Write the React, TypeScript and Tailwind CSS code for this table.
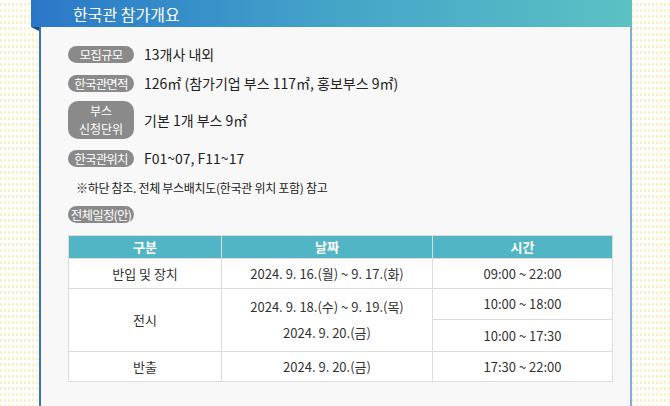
import React from "react";

const font = { fontFamily: '"Noto Sans CJK KR", "Noto Sans", sans-serif' };

const Badge: React.FC<{ children: React.ReactNode; tall?: boolean }> = ({ children, tall }) => (
    <div
        className={
            tall
                ? "w-[66px] h-[38px] rounded-[10px] bg-[#8a8a8a] text-white text-[12px] leading-[18px] flex flex-col items-center justify-center whitespace-nowrap"
                : "w-[66px] h-[17px] rounded-full bg-[#8a8a8a] text-white text-[12.5px] leading-[17px] flex items-center justify-center tracking-[-0.8px] whitespace-nowrap"
        }
    >
        {children}
    </div>
);

const InfoRow: React.FC<{ label: React.ReactNode; text: string; tall?: boolean; mt: string }> = ({
    label,
    text,
    tall,
    mt,
}) => (
    <div className={`flex items-center gap-[10px] ${mt}`}>
        <Badge tall={tall}>{label}</Badge>
        <span className="text-[14px] text-[#222] leading-[17px]">{text}</span>
    </div>
);

export default function App() {
    return (
        <div
            className="w-[670px] h-[406px] overflow-hidden flex flex-col bg-[linear-gradient(#fff_3px,transparent_3px),linear-gradient(90deg,#fdf0c4_2px,#fff_2px)] bg-[size:4px_6px]"
            style={font}
        >
            {/* title bar */}
            <div className="ml-[31px] w-[601px] h-[27px] shrink-0 bg-gradient-to-r from-[#2a77c8] via-[#44a4c8] to-[#5cc1c3] flex items-center pl-[42px]">
                <span className="text-white text-[16px] leading-none">한국관 참가개요</span>
            </div>

            <div className="ml-[31px] flex flex-1">
                <svg width="8" height="4" className="shrink-0">
                    <polygon points="0,0 8,0 8,4" fill="#1c4e86" />
                </svg>
                <div className="w-[593px] border-l-2 border-[#3a74b6] border-r-2 border-r-[#84acd9] bg-[#f8f8f8] pl-[27px] pt-[19px]">
                    <InfoRow label="모집규모" text="13개사 내외" mt="" />
                    <InfoRow
                        label="한국관면적"
                        text="126㎡ (참가기업 부스 117㎡, 홍보부스 9㎡)"
                        mt="mt-[12px]"
                    />
                    <InfoRow
                        label={
                            <>
                                <span>부스</span>
                                <span>신청단위</span>
                            </>
                        }
                        tall
                        text="기본 1개 부스 9㎡"
                        mt="mt-[9px]"
                    />
                    <InfoRow label="한국관위치" text="F01~07, F11~17" mt="mt-[11px]" />
                    <div className="mt-[14px] ml-[8px] text-[12px] leading-[14px] text-[#222] tracking-[-0.3px]">
                        ※하단 참조. 전체 부스배치도(한국관 위치 포함) 참고
                    </div>
                    <div className="mt-[11px]">
                        <Badge>전체일정(안)</Badge>
                    </div>

                    <table className="mt-[12px] w-[545px] border-collapse text-[13px] text-[#333] text-center">
                        <thead>
                            <tr className="h-[23px] bg-[#52b5c6] text-white font-bold">
                                <th className="w-[153px] border border-[#dcdcdc] font-bold">구분</th>
                                <th className="w-[211px] border border-[#dcdcdc] font-bold">날짜</th>
                                <th className="border border-[#dcdcdc] font-bold">시간</th>
                            </tr>
                        </thead>
                        <tbody className="bg-white">
                            <tr className="h-[30px]">
                                <td className="border border-[#dcdcdc]">반입 및 장치</td>
                                <td className="border border-[#dcdcdc]">2024. 9. 16.(월) ~ 9. 17.(화)</td>
                                <td className="border border-[#dcdcdc]">09:00 ~ 22:00</td>
                            </tr>
                            <tr className="h-[31px]">
                                <td rowSpan={2} className="border border-[#dcdcdc]">
                                    전시
                                </td>
                                <td rowSpan={2} className="border border-[#dcdcdc] leading-[26px]">
                                    <div>2024. 9. 18.(수) ~ 9. 19.(목)</div>
                                    <div>2024. 9. 20.(금)</div>
                                </td>
                                <td className="border border-[#dcdcdc]">10:00 ~ 18:00</td>
                            </tr>
                            <tr className="h-[32px]">
                                <td className="border border-[#dcdcdc]">10:00 ~ 17:30</td>
                            </tr>
                            <tr className="h-[30px]">
                                <td className="border border-[#dcdcdc]">반출</td>
                                <td className="border border-[#dcdcdc]">2024. 9. 20.(금)</td>
                                <td className="border border-[#dcdcdc]">17:30 ~ 22:00</td>
                            </tr>
                        </tbody>
                    </table>
                </div>
            </div>
        </div>
    );
}
